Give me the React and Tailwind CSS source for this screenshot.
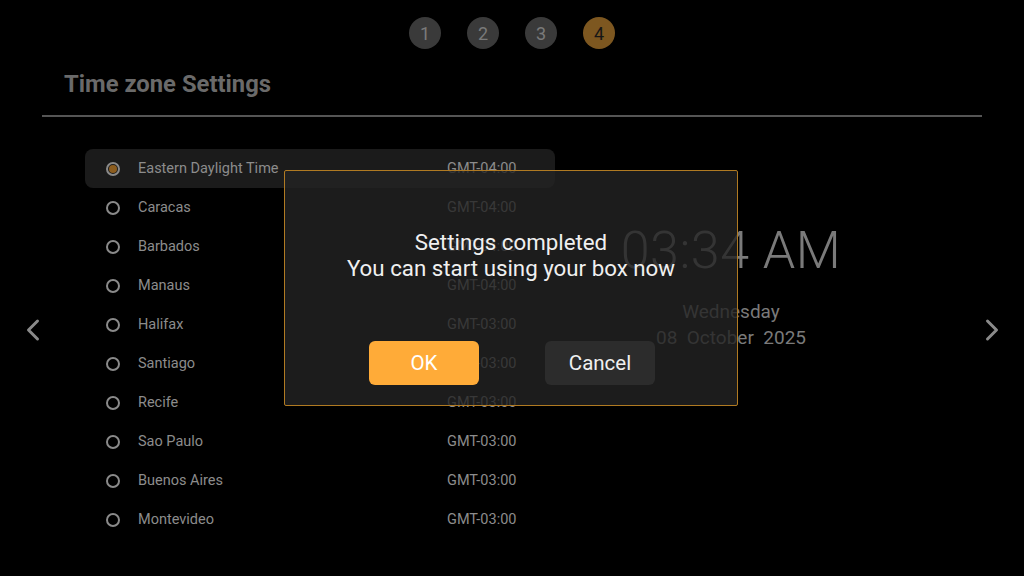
import React from 'react';
import { ChevronLeft, ChevronRight } from 'lucide-react';

const zones = [
    ['Eastern Daylight Time', 'GMT-04:00'],
    ['Caracas', 'GMT-04:00'],
    ['Barbados', 'GMT-04:00'],
    ['Manaus', 'GMT-04:00'],
    ['Halifax', 'GMT-03:00'],
    ['Santiago', 'GMT-03:00'],
    ['Recife', 'GMT-03:00'],
    ['Sao Paulo', 'GMT-03:00'],
    ['Buenos Aires', 'GMT-03:00'],
    ['Montevideo', 'GMT-03:00'],
];

const App = () => {
    return (
        <div
            className="relative w-[1024px] h-[576px] overflow-hidden bg-black"
            style={{ fontFamily: 'Roboto, "Noto Sans", sans-serif' }}
        >
            {/* Steps */}
            <div className="flex justify-center gap-[26px] pt-[17px]">
                {[1, 2, 3, 4].map((n) => (
                    <div
                        key={n}
                        className={
                            n === 4
                                ? 'w-8 h-8 rounded-full bg-[#7d5720] text-[#161616] flex items-center justify-center text-[18px]'
                                : 'w-8 h-8 rounded-full bg-[#3a3a3a] text-[#7a7a7a] flex items-center justify-center text-[18px]'
                        }
                    >
                        {n}
                    </div>
                ))}
            </div>

            {/* Title */}
            <h1 className="pl-16 pt-[20px] text-[23.8px] leading-[31px] font-bold text-[#6a6a6a]">
                Time zone Settings
            </h1>
            <div className="mx-[42px] mt-[15px] h-[2px] bg-[#555555]" />

            {/* Content */}
            <div className="flex pt-[32px]">
                <div className="ml-[85px] w-[470px] flex flex-col">
                    {zones.map(([name, gmt], i) => (
                        <div
                            key={name}
                            className={
                                i === 0
                                    ? 'flex items-center h-[39px] pl-[21px] rounded-lg bg-[#1b1b1b] text-[#8c8c8c] text-[14.5px]'
                                    : 'flex items-center h-[39px] pl-[21px] text-[#8c8c8c] text-[14.5px]'
                            }
                        >
                            <span className="w-[14px] h-[14px] rounded-full border-2 border-[#8a8a8a] flex items-center justify-center">
                                {i === 0 && <span className="w-[8px] h-[8px] rounded-full bg-[#8c5d1f]" />}
                            </span>
                            <span className="ml-[18px] w-[309px]">{name}</span>
                            <span>{gmt}</span>
                        </div>
                    ))}
                </div>

                {/* Clock */}
                <div className="flex-1 flex flex-col items-center pt-[72px] pr-[117px] text-[#7a7a7a]">
                    <div className="text-[52px] leading-[60px] font-light tracking-[0.5px]">03:34 AM</div>
                    <div className="mt-[18px] text-[19px] leading-[26px]">Wednesday</div>
                    <div className="text-[19px] leading-[26px] whitespace-pre">08  October  2025</div>
                </div>
            </div>

            {/* Side arrows */}
            <ChevronLeft size={36} strokeWidth={2} className="absolute left-[15px] top-[312px] text-[#8a8a8a]" />
            <ChevronRight size={36} strokeWidth={2} className="absolute left-[974px] top-[312px] text-[#8a8a8a]" />

            {/* Dialog */}
            <div className="absolute left-[284px] top-[170px] w-[454px] h-[236px] rounded-[2px] border-[1.5px] border-[#b07a22] bg-[rgba(35,35,35,0.8)] flex flex-col items-center pt-[58px]">
                <p className="text-[22.3px] leading-[26px] text-[#f0f0f0] text-center">
                    Settings completed
                    <br />
                    You can start using your box now
                </p>
                <div className="flex gap-[66px] mt-[60px] ml-[2px]">
                    <button className="w-[110px] h-[44px] rounded-md bg-[#ffab38] text-white text-[20.5px]">OK</button>
                    <button className="w-[110px] h-[44px] rounded-md bg-[#2c2c2c] text-[#f0f0f0] text-[20.5px]">Cancel</button>
                </div>
            </div>
        </div>
    );
};

export default App;
